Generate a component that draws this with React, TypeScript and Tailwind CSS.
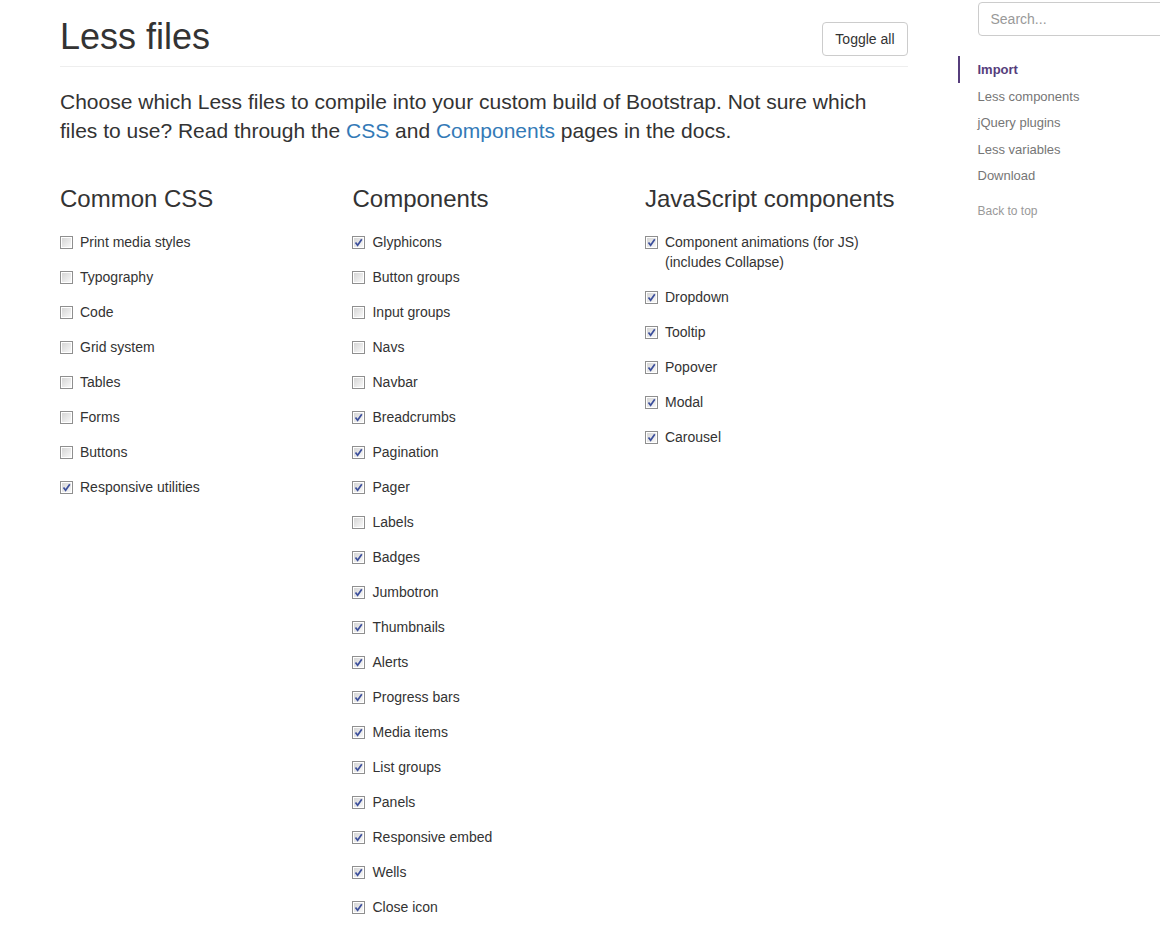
const commonCss: [string, boolean][] = [
  ["Print media styles", false],
  ["Typography", false],
  ["Code", false],
  ["Grid system", false],
  ["Tables", false],
  ["Forms", false],
  ["Buttons", false],
  ["Responsive utilities", true],
];

const components: [string, boolean][] = [
  ["Glyphicons", true],
  ["Button groups", false],
  ["Input groups", false],
  ["Navs", false],
  ["Navbar", false],
  ["Breadcrumbs", true],
  ["Pagination", true],
  ["Pager", true],
  ["Labels", false],
  ["Badges", true],
  ["Jumbotron", true],
  ["Thumbnails", true],
  ["Alerts", true],
  ["Progress bars", true],
  ["Media items", true],
  ["List groups", true],
  ["Panels", true],
  ["Responsive embed", true],
  ["Wells", true],
  ["Close icon", true],
];

const jsComponents: [string, boolean][] = [
  ["Component animations (for JS) (includes Collapse)", true],
  ["Dropdown", true],
  ["Tooltip", true],
  ["Popover", true],
  ["Modal", true],
  ["Carousel", true],
];

const navItems = ["Import", "Less components", "jQuery plugins", "Less variables", "Download"];

const CheckBox = ({ checked }: { checked: boolean }) => (
  <span className="mt-[4px] flex h-[13px] w-[13px] shrink-0 border border-[#8f8f8f] bg-white p-px">
    <span className="relative flex h-full w-full bg-gradient-to-br from-[#d6d6d6] to-[#f8f8f8]">
      {checked && (
        <svg width="11" height="11" viewBox="0 0 11 11" className="absolute -left-px -top-px">
          <path d="M2.5 5.5 L4.6 8.2 L8.8 2.2" fill="none" stroke="#3c4f9c" strokeWidth="1.7" />
        </svg>
      )}
    </span>
  </span>
);

const Column = ({ title, items }: { title: string; items: [string, boolean][] }) => (
  <div className="w-1/3 px-[15px]">
    <h3 className="mt-[41px] text-[24px] leading-[26.4px] font-normal">{title}</h3>
    <div className="mt-[19px] flex flex-col gap-[15px]">
      {items.map(([label, checked]) => (
        <label key={label} className="flex items-start">
          <CheckBox checked={checked} />
          <span className="ml-[7px] pr-[30px]">{label}</span>
        </label>
      ))}
    </div>
  </div>
);

export default function App() {
  return (
    <div className="h-[936px] w-[1160px] overflow-hidden bg-white font-['Liberation_Sans',Arial,sans-serif] text-[14px] leading-[20px] text-[#333]">
      <div className="ml-[30px] flex w-[1170px] px-[15px]">
        <div className="w-[877.5px] shrink-0 px-[15px]">
          <div className="mt-[17px] flex items-start justify-between border-b border-[#eee] pb-[9px]">
            <h1 className="text-[36px] leading-[39.6px] font-normal">Less files</h1>
            <button className="mt-[5px] rounded-[4px] border border-[#ccc] bg-white px-[12px] py-[6px] text-[14px] leading-[20px] text-[#333]">
              Toggle all
            </button>
          </div>
          <p className="mt-[20px] text-[21px] leading-[29.4px]">
            Choose which Less files to compile into your custom build of Bootstrap. Not sure which files to use? Read
            through the <a className="text-[#337ab7]">CSS</a> and <a className="text-[#337ab7]">Components</a> pages in
            the docs.
          </p>
          <div className="-mx-[15px] flex">
            <Column title="Common CSS" items={commonCss} />
            <Column title="Components" items={components} />
            <Column title="JavaScript components" items={jsComponents} />
          </div>
        </div>
        <div className="w-[292.5px] shrink-0 px-[15px]">
          <div className="pl-[20px]">
            <input
              placeholder="Search..."
              className="mt-[2px] ml-[20px] h-[34px] w-[250px] rounded-[4px] border border-[#ccc] px-[12px] text-[14px] text-[#555] placeholder:text-[#999] outline-none"
            />
            <ul className="mt-[20px]">
              {navItems.map((item, i) => (
                <li key={item}>
                  <a
                    className={
                      i === 0
                        ? "block border-l-2 border-[#563d7c] pt-[5px] pb-[3px] pl-[18px] text-[13px] leading-[18.57px] font-bold text-[#563d7c]"
                        : "block pt-[5px] pb-[3px] px-[20px] text-[13px] leading-[18.57px] text-[#767676]"
                    }
                  >
                    {item}
                  </a>
                </li>
              ))}
            </ul>
            <a className="mt-[10px] block py-[4px] px-[20px] text-[12px] leading-[17.14px] text-[#999]">Back to top</a>
          </div>
        </div>
      </div>
    </div>
  );
}
